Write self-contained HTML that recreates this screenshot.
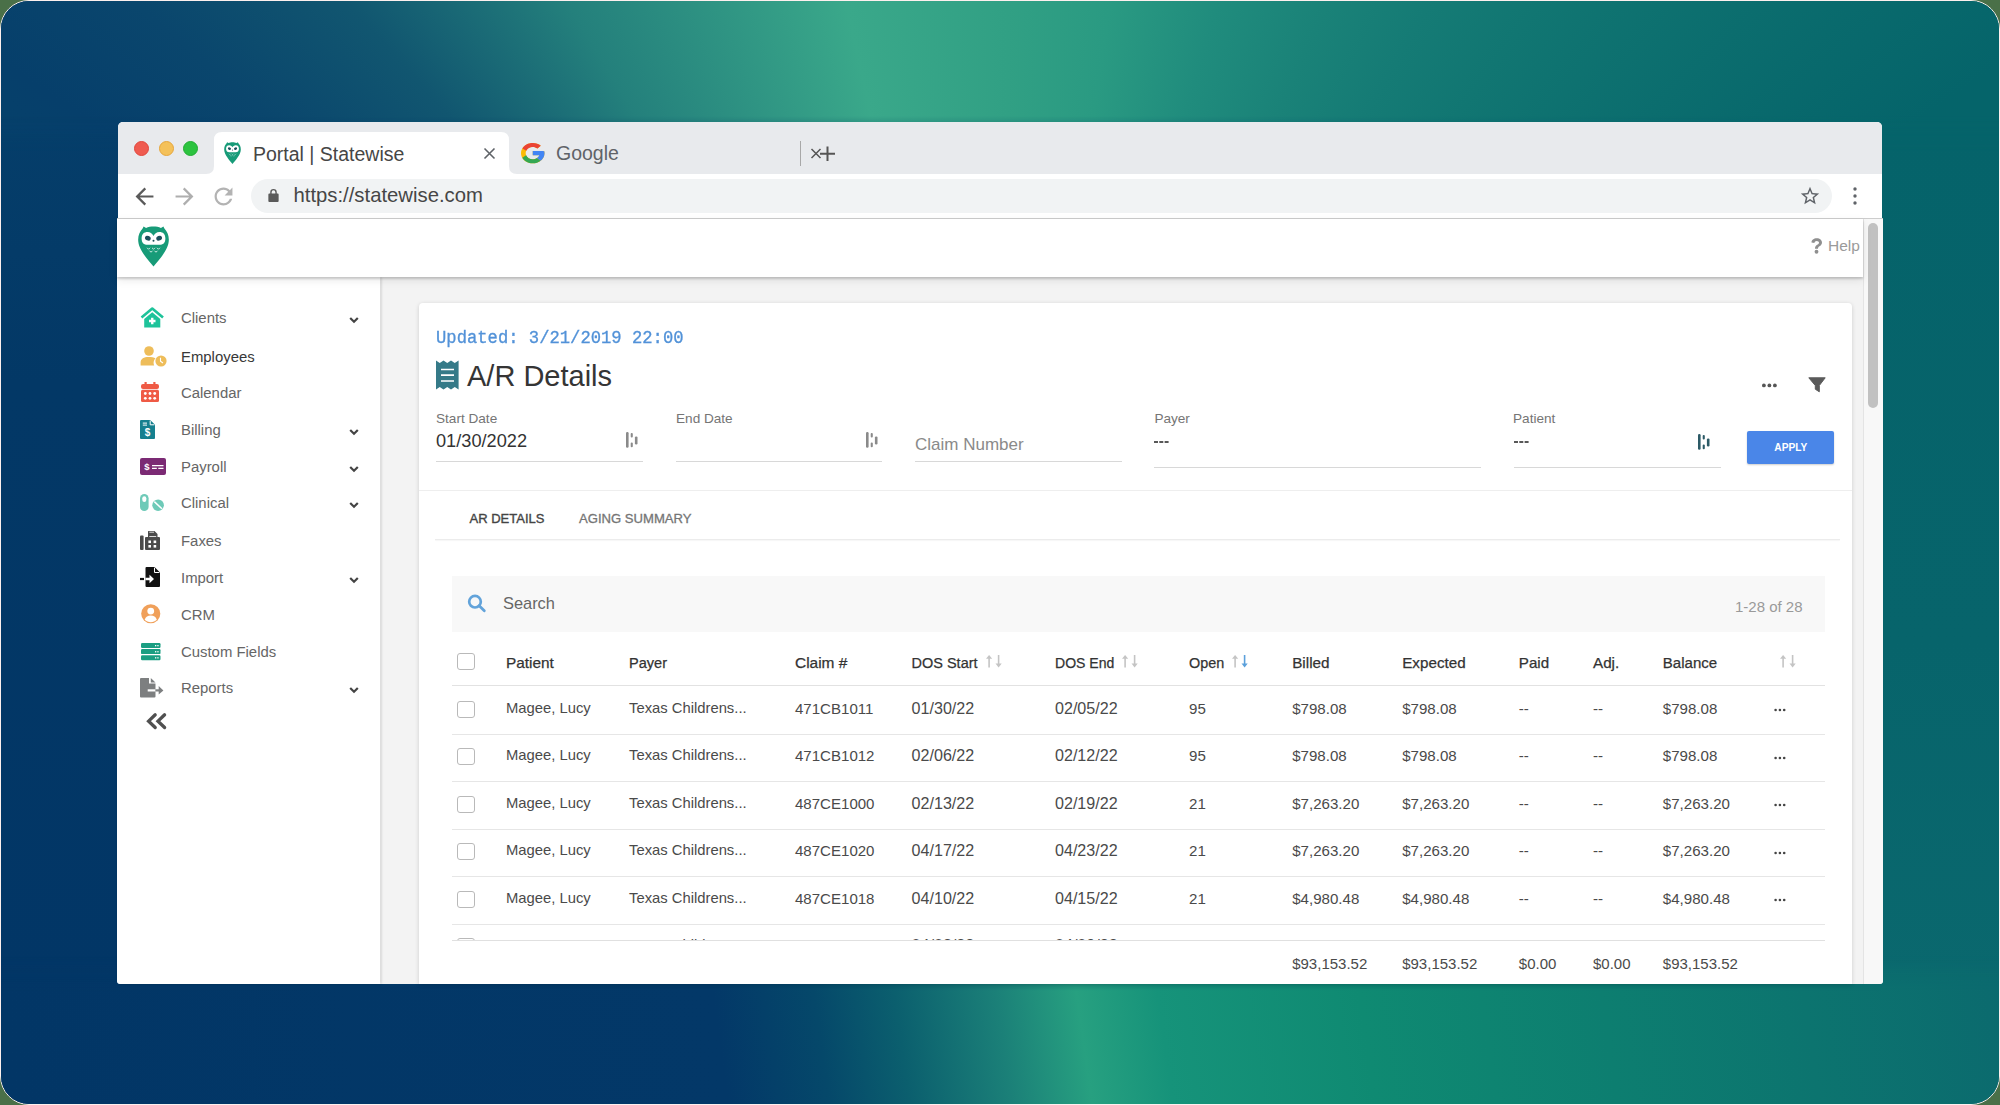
<!DOCTYPE html>
<html><head><meta charset="utf-8"><style>
*{box-sizing:border-box;margin:0;padding:0}
html,body{width:2000px;height:1105px;overflow:hidden;background:#4a7048;font-family:"Liberation Sans",sans-serif}
.abs{position:absolute}
.t{position:absolute;white-space:nowrap;line-height:1}
svg{overflow:visible}
</style></head><body>
<div class="abs" style="left:0;top:0;width:2000px;height:1105px;border:1.7px solid #fdf0ee;border-radius:29px;overflow:hidden;background:linear-gradient(90deg,#033866 0%,#07646b 100%)"><div class="abs" style="left:0;top:120px;width:120px;height:870px;background:linear-gradient(180deg,#053e6a 0%,#033866 30%,#023666 100%)"></div><div class="abs" style="left:1880px;top:120px;width:120px;height:870px;background:linear-gradient(180deg,#05636a 0%,#07646b 60%,#0a686e 100%)"></div><div class="abs" style="left:0;top:0;width:2000px;height:150px;background:conic-gradient(from 0deg at 1006px 734px,#31a084 0deg,#2a9a82 8deg,#208c7d 16deg,#1a8278 23.6deg,#157b75 30deg,#117672 36deg,#0b6d6e 46deg,#05646a 56deg,#05636a 250deg,#063f6b 303.8deg,#0a466d 310deg,#115670 318deg,#24807c 329deg,#3aa88a 347.6deg,#31a084 360deg);-webkit-mask-image:linear-gradient(180deg,#000 0,#000 115px,transparent 150px)"></div><div class="abs" style="left:0;top:955px;width:2000px;height:150px;background:linear-gradient(82deg,#023666 0%,#033868 36%,#05486a 41%,#0b5f6e 45%,#1b8078 50%,#27a080 54%,#16937a 58%,#0f8a72 68%,#0d7e70 80%,#0b6a6e 100%);-webkit-mask-image:linear-gradient(0deg,#000 0,#000 115px,transparent 150px)"></div></div>
<div class="abs" style="left:118px;top:122px;width:1764px;height:97px;background:#fff;border-radius:5px 5px 0 0;overflow:hidden"><div class="abs" style="left:0;top:0;width:1764px;height:52px;background:#e8eaed"></div></div>
<div class="abs" style="left:117px;top:218px;width:1766px;height:766px;background:#fff;border-radius:0 0 3px 3px"></div>
<div class="abs" style="left:133.5px;top:140.5px;width:15px;height:15px;border-radius:50%;background:#ef5b50;border:1px solid #e2463c"></div>
<div class="abs" style="left:158.5px;top:140.5px;width:15px;height:15px;border-radius:50%;background:#f4c15a;border:1px solid #e6a63c"></div>
<div class="abs" style="left:183.0px;top:140.5px;width:15px;height:15px;border-radius:50%;background:#2cc33f;border:1px solid #22ad33"></div>
<svg class="abs" style="left:204px;top:131px;" width="316" height="43" viewBox="0 0 316 43"><path d="M2 43 Q10 43 10 35 L10 9 Q10 1 18 1 L297 1 Q305 1 305 9 L305 35 Q305 43 313 43 Z" fill="#fff"/></svg>
<svg class="abs" style="left:223.5px;top:142px;" width="17" height="22" viewBox="0 0 31 41"><path fill="#179b78" d="M15.5 41 C10 34 0 24 0 14 C0 9 2 5 4.5 2.5 L5.5 0.5 L8 2 C10 1 13 0.6 15.5 0.6 C18 0.6 21 1 23 2 L25.5 0.5 L26.5 2.5 C29 5 31 9 31 14 C31 24 21 34 15.5 41Z"/><path fill="#fff" d="M3.5 12.5 C3.5 8 6 6 9.5 6 C12.5 6 14.5 8 15.5 10 C16.5 8 18.5 6 21.5 6 C25 6 27.5 8 27.5 12.5 C27.5 17 25 19 21.5 19 L9.5 19 C6 19 3.5 17 3.5 12.5Z"/><ellipse cx="9.8" cy="12.3" rx="3" ry="2.3" fill="#1d4f5c" transform="rotate(25 9.8 12.3)"/><ellipse cx="21.2" cy="12.3" rx="3" ry="2.3" fill="#1d4f5c" transform="rotate(-25 21.2 12.3)"/><circle cx="15.5" cy="15" r="1" fill="#1d4f5c"/><path d="M9 22 l1.5 1.5 l1.5-1.5 M14 22 l1.5 1.5 l1.5-1.5 M19 22 l1.5 1.5 l1.5-1.5 M11.5 25 l1.5 1.5 l1.5-1.5 M16.5 25 l1.5 1.5 l1.5-1.5" stroke="#fff" stroke-width="0.8" fill="none"/></svg>
<div class="t" style="left:253.00px;top:144.79px;font-size:19.5px;color:#464646;font-weight:normal;">Portal | Statewise</div>
<svg class="abs" style="left:483px;top:147px;" width="13" height="13" viewBox="0 0 13 13"><path d="M1.5 1.5 L11.5 11.5 M11.5 1.5 L1.5 11.5" stroke="#5f6368" stroke-width="1.6"/></svg>
<svg class="abs" style="left:521px;top:143px;" width="23.5" height="20.3" viewBox="4 4 40 40" preserveAspectRatio="none"><path fill="#FBBC05" d="M43.611,20.083H42V20H24v8h11.303c-1.649,4.657-6.08,8-11.303,8c-6.627,0-12-5.373-12-12c0-6.627,5.373-12,12-12c3.059,0,5.842,1.154,7.961,3.039l5.657-5.657C34.046,6.053,29.268,4,24,4C12.955,4,4,12.955,4,24c0,11.045,8.955,20,20,20c11.045,0,20-8.955,20-20C44,22.659,43.862,21.35,43.611,20.083z"/><path fill="#EA4335" d="M6.306,14.691l6.571,4.819C14.655,15.108,18.961,12,24,12c3.059,0,5.842,1.154,7.961,3.039l5.657-5.657C34.046,6.053,29.268,4,24,4C16.318,4,9.656,8.337,6.306,14.691z"/><path fill="#34A853" d="M24,44c5.166,0,9.86-1.977,13.409-5.192l-6.19-5.238C29.211,35.091,26.715,36,24,36c-5.202,0-9.619-3.317-11.283-7.946l-6.522,5.025C9.505,39.556,16.227,44,24,44z"/><path fill="#4285F4" d="M43.611,20.083H42V20H24v8h11.303c-0.792,2.237-2.231,4.166-4.087,5.571c0.001-0.001,0.002-0.001,0.003-0.002l6.19,5.238C36.971,39.205,44,34,44,24C44,22.659,43.862,21.35,43.611,20.083z"/></svg>
<div class="t" style="left:556.00px;top:143.99px;font-size:19.5px;color:#5f6368;font-weight:normal;">Google</div>
<div class="abs" style="left:800px;top:141px;width:1px;height:25px;background:#a8a8a8;"></div>
<svg class="abs" style="left:810px;top:146px;" width="28" height="16" viewBox="0 0 28 16"><path d="M1.5 3 L10.5 12 M10.5 3 L1.5 12" stroke="#555" stroke-width="1.5"/><path d="M17.5 0.5 V15 M10 7.8 H25" stroke="#555" stroke-width="2"/></svg>
<div class="abs" style="left:117px;top:218px;width:1766px;height:1px;background:#cdcdcd;"></div>
<svg class="abs" style="left:135px;top:187px;" width="19" height="19" viewBox="3.5 3.5 17 17"><path fill="#5a5a5a" d="M20 11H7.83l5.59-5.59L12 4l-8 8 8 8 1.41-1.41L7.83 13H20v-2z"/></svg>
<svg class="abs" style="left:175px;top:187px;" width="19" height="19" viewBox="3.5 3.5 17 17"><path fill="#aeaeae" d="M12 4l-1.41 1.41L16.17 11H4v2h12.17l-5.58 5.59L12 20l8-8z"/></svg>
<svg class="abs" style="left:214px;top:187px;" width="19" height="19" viewBox="3.5 3.5 17 17"><path fill="#b3b3b3" d="M17.65 6.35C16.2 4.9 14.21 4 12 4c-4.42 0-7.99 3.58-7.99 8s3.57 8 7.99 8c3.73 0 6.84-2.55 7.73-6h-2.08c-.82 2.33-3.04 4-5.65 4-3.31 0-6-2.69-6-6s2.69-6 6-6c1.66 0 3.14.69 4.22 1.78L13 11h7V4l-2.35 2.35z"/></svg>
<div class="abs" style="left:251px;top:179px;width:1581px;height:34px;border-radius:17px;background:#f1f3f4"></div>
<svg class="abs" style="left:268px;top:188px;" width="11" height="14" viewBox="0 0 11 15"><path fill="#5a5a5a" d="M2 6 V4.5 A3.5 3.5 0 0 1 9 4.5 V6 H10 A1 1 0 0 1 11 7 V14 A1 1 0 0 1 10 15 H1 A1 1 0 0 1 0 14 V7 A1 1 0 0 1 1 6Z M3.5 6 H7.5 V4.5 A2 2 0 0 0 3.5 4.5Z" fill-rule="evenodd"/></svg>
<div class="t" style="left:293.50px;top:185.12px;font-size:20.3px;color:#464646;font-weight:normal;">https://statewise.com</div>
<svg class="abs" style="left:1799px;top:185px;" width="22" height="22" viewBox="0 0 24 24"><path fill="#5f6368" d="M22 9.24l-7.19-.62L12 2 9.19 8.63 2 9.24l5.46 4.73L5.82 21 12 17.27 18.18 21l-1.63-7.03L22 9.24zM12 15.4l-3.76 2.27 1-4.28-3.32-2.88 4.38-.38L12 6.1l1.71 4.04 4.38.38-3.32 2.88 1 4.28L12 15.4z"/></svg>
<svg class="abs" style="left:1851px;top:186px;" width="8" height="20" viewBox="0 0 8 20"><circle cx="4" cy="3" r="1.7" fill="#5f6368"/><circle cx="4" cy="10" r="1.7" fill="#5f6368"/><circle cx="4" cy="17" r="1.7" fill="#5f6368"/></svg>
<div class="abs" style="left:381px;top:277px;width:1482px;height:707px;background:#f3f3f3;"></div>
<div class="abs" style="left:1863px;top:219px;width:20px;height:765px;background:#f8f8f8;border-left:1px solid #e4e4e4;border-bottom-right-radius:4px"></div>
<div class="abs" style="left:1868px;top:223px;width:10px;height:185px;border-radius:5px;background:#c1c1c1"></div>
<div class="abs" style="left:117px;top:219px;width:1746px;height:58px;background:#fff;box-shadow:0 1.5px 2px rgba(0,0,0,.17),0 3px 9px rgba(0,0,0,.09);z-index:3"></div>
<svg class="abs" style="left:137.5px;top:225.7px;z-index:4" width="31" height="40.6" viewBox="0 0 31 41"><path fill="#179b78" d="M15.5 41 C10 34 0 24 0 14 C0 9 2 5 4.5 2.5 L5.5 0.5 L8 2 C10 1 13 0.6 15.5 0.6 C18 0.6 21 1 23 2 L25.5 0.5 L26.5 2.5 C29 5 31 9 31 14 C31 24 21 34 15.5 41Z"/><path fill="#fff" d="M3.5 12.5 C3.5 8 6 6 9.5 6 C12.5 6 14.5 8 15.5 10 C16.5 8 18.5 6 21.5 6 C25 6 27.5 8 27.5 12.5 C27.5 17 25 19 21.5 19 L9.5 19 C6 19 3.5 17 3.5 12.5Z"/><ellipse cx="9.8" cy="12.3" rx="3" ry="2.3" fill="#1d4f5c" transform="rotate(25 9.8 12.3)"/><ellipse cx="21.2" cy="12.3" rx="3" ry="2.3" fill="#1d4f5c" transform="rotate(-25 21.2 12.3)"/><circle cx="15.5" cy="15" r="1" fill="#1d4f5c"/><path d="M9 22 l1.5 1.5 l1.5-1.5 M14 22 l1.5 1.5 l1.5-1.5 M19 22 l1.5 1.5 l1.5-1.5 M11.5 25 l1.5 1.5 l1.5-1.5 M16.5 25 l1.5 1.5 l1.5-1.5" stroke="#fff" stroke-width="0.8" fill="none"/></svg>
<svg class="abs" style="left:1811px;top:237.5px;z-index:4" width="11.5" height="16" viewBox="0 0 23 32"><path fill="#8f8f8f" d="M1 9 C1 4 5.5 0.5 11.5 0.5 C18 0.5 22 4.5 22 9 C22 13 19.5 15 17 16.5 C14.5 18 14 19.5 14 21.5 L8 21.5 C8 18 9 15.5 12.5 13.5 C15 12 16 11 16 9.5 C16 7.5 14 6 11.5 6 C9 6 7 7.5 6.8 10 Z"/><circle cx="11" cy="27.5" r="3.8" fill="#8f8f8f"/></svg>
<div class="t" style="left:1828.00px;top:237.88px;font-size:15.5px;color:#9a9a9a;font-weight:normal;z-index:4">Help</div>
<div class="abs" style="left:117px;top:277px;width:263px;height:707px;background:#fff;box-shadow:1px 0 3px rgba(0,0,0,.2);border-bottom-left-radius:4px;z-index:2"></div>
<div class="t" style="left:181.00px;top:311.19px;font-size:14.9px;color:#666;font-weight:normal;z-index:3;">Clients</div>
<svg class="abs" style="left:348.5px;top:317.2px;z-index:3" width="10" height="6" viewBox="0 0 10 6"><path d="M1.2 1 L5 4.8 L8.8 1" stroke="#444" stroke-width="2.2" fill="none"/></svg>
<div class="t" style="left:181.00px;top:349.79px;font-size:14.9px;color:#383838;font-weight:normal;z-index:3;">Employees</div>
<div class="t" style="left:181.00px;top:385.89px;font-size:14.9px;color:#666;font-weight:normal;z-index:3;">Calendar</div>
<div class="t" style="left:181.00px;top:423.29px;font-size:14.9px;color:#666;font-weight:normal;z-index:3;">Billing</div>
<svg class="abs" style="left:348.5px;top:429.29999999999995px;z-index:3" width="10" height="6" viewBox="0 0 10 6"><path d="M1.2 1 L5 4.8 L8.8 1" stroke="#444" stroke-width="2.2" fill="none"/></svg>
<div class="t" style="left:181.00px;top:459.99px;font-size:14.9px;color:#666;font-weight:normal;z-index:3;">Payroll</div>
<svg class="abs" style="left:348.5px;top:466.0px;z-index:3" width="10" height="6" viewBox="0 0 10 6"><path d="M1.2 1 L5 4.8 L8.8 1" stroke="#444" stroke-width="2.2" fill="none"/></svg>
<div class="t" style="left:181.00px;top:495.99px;font-size:14.9px;color:#666;font-weight:normal;z-index:3;">Clinical</div>
<svg class="abs" style="left:348.5px;top:502.0px;z-index:3" width="10" height="6" viewBox="0 0 10 6"><path d="M1.2 1 L5 4.8 L8.8 1" stroke="#444" stroke-width="2.2" fill="none"/></svg>
<div class="t" style="left:181.00px;top:533.99px;font-size:14.9px;color:#666;font-weight:normal;z-index:3;">Faxes</div>
<div class="t" style="left:181.00px;top:570.69px;font-size:14.9px;color:#666;font-weight:normal;z-index:3;">Import</div>
<svg class="abs" style="left:348.5px;top:576.6999999999999px;z-index:3" width="10" height="6" viewBox="0 0 10 6"><path d="M1.2 1 L5 4.8 L8.8 1" stroke="#444" stroke-width="2.2" fill="none"/></svg>
<div class="t" style="left:181.00px;top:608.19px;font-size:14.9px;color:#666;font-weight:normal;z-index:3;">CRM</div>
<div class="t" style="left:181.00px;top:644.69px;font-size:14.9px;color:#666;font-weight:normal;z-index:3;">Custom Fields</div>
<div class="t" style="left:181.00px;top:681.09px;font-size:14.9px;color:#666;font-weight:normal;z-index:3;">Reports</div>
<svg class="abs" style="left:348.5px;top:687.1px;z-index:3" width="10" height="6" viewBox="0 0 10 6"><path d="M1.2 1 L5 4.8 L8.8 1" stroke="#444" stroke-width="2.2" fill="none"/></svg>
<svg class="abs" style="left:140px;top:307px;z-index:3" width="25" height="21" viewBox="0 0 25 21"><path d="M1.5 10.5 L12.25 1.5 L23 10.5" stroke="#1ec39a" stroke-width="2.6" fill="none" stroke-linejoin="round"/><path d="M4.2 12 L12.25 5.2 L20.3 12 L20.3 20.5 L4.2 20.5Z" fill="#1ec39a"/><path d="M12.25 10.8 V17.2 M9 14 H15.5" stroke="#fff" stroke-width="2.4"/></svg>
<svg class="abs" style="left:139.5px;top:345.5px;z-index:3" width="27" height="20" viewBox="0 0 27 20"><circle cx="9" cy="5" r="4.8" fill="#eebd5a"/><path d="M0.6 19.5 L0.6 16.5 C0.6 12.8 4 11 8.5 11 C11.5 11 14 11.5 15.5 12.3 C14.3 13.5 13.6 15.3 13.6 17 C13.6 18 13.8 18.8 14.2 19.5 Z" fill="#eebd5a"/><circle cx="21" cy="15" r="5.6" fill="#eebd5a"/><path d="M20.5 11.8 V15.3 L23 17" stroke="#fff" stroke-width="1.1" fill="none"/></svg>
<svg class="abs" style="left:140.5px;top:382px;z-index:3" width="18" height="20" viewBox="0 0 18 20"><rect x="0" y="2" width="18" height="5" rx="2" fill="#ef5a45"/><rect x="0" y="7.8" width="18" height="12.2" rx="1.5" fill="#ef5a45"/><rect x="3.5" y="0" width="2.2" height="4" fill="#ef5a45"/><rect x="12.3" y="0" width="2.2" height="4" fill="#ef5a45"/><g fill="#fff"><circle cx="4.3" cy="11.5" r="1.4"/><circle cx="9" cy="11.5" r="1.4"/><circle cx="13.7" cy="11.5" r="1.4"/><circle cx="4.3" cy="16.3" r="1.4"/><circle cx="9" cy="16.3" r="1.4"/><circle cx="13.7" cy="16.3" r="1.4"/></g></svg>
<svg class="abs" style="left:140.4px;top:419.8px;z-index:3" width="15" height="19" viewBox="0 0 15 19"><path d="M0 1 Q0 0 1 0 L10.2 0 L15 4.8 L15 18 Q15 19 14 19 L1 19 Q0 19 0 18 Z" fill="#16808f"/><path d="M10.2 0.6 L10.2 4.8 L14.4 4.8" stroke="#fff" stroke-width="1" fill="none"/><rect x="2.8" y="2.6" width="4.2" height="1" fill="#fff"/><rect x="2.8" y="4.6" width="4.2" height="1" fill="#fff"/><text x="7.5" y="15.8" font-size="10" font-weight="bold" fill="#fff" text-anchor="middle" font-family="Liberation Sans">$</text></svg>
<svg class="abs" style="left:140.4px;top:457.8px;z-index:3" width="26" height="17" viewBox="0 0 26 17"><rect x="0" y="0" width="26" height="17" rx="2" fill="#7b2a74"/><text x="6.8" y="12.3" font-size="9.5" font-weight="bold" fill="#fff" text-anchor="middle" font-family="Liberation Sans">$</text><path d="M12 7.6 H23.5 M12 10.4 H16.8 M18.3 10.4 H23.5" stroke="#fff" stroke-width="1.3"/></svg>
<svg class="abs" style="left:140.4px;top:494.2px;z-index:3" width="24" height="17" viewBox="0 0 24 17"><rect x="0" y="0" width="8.6" height="17" rx="4.3" fill="#6ecab8"/><rect x="2.3" y="2.3" width="4" height="5.6" rx="2" fill="#fff"/><circle cx="18.1" cy="11.2" r="5.8" fill="#6ecab8"/><path d="M14.3 7.6 L21.9 14.8" stroke="#fff" stroke-width="1.5"/></svg>
<svg class="abs" style="left:140.4px;top:530.8px;z-index:3" width="20" height="19" viewBox="0 0 20 19"><rect x="0" y="4.5" width="3.6" height="14.5" rx="1" fill="#4a4a4a"/><path d="M5 7 Q5 6 6 6 L8 6 L8 0.5 Q8 0 8.5 0 L14.5 0 L17.5 3 L17.5 6 L19 6 Q20 6 20 7 L20 18 Q20 19 19 19 L6 19 Q5 19 5 18 Z" fill="#4a4a4a"/><path d="M9.3 5.5 H16.2 M9.3 1.2 H14" stroke="#fff" stroke-width="0.8"/><g fill="#fff"><rect x="8.4" y="9.5" width="2.6" height="2.6"/><rect x="13.6" y="9.5" width="2.6" height="2.6"/><rect x="8.4" y="14" width="2.6" height="2.6"/><rect x="13.6" y="14" width="2.6" height="2.6"/></g></svg>
<svg class="abs" style="left:140.3px;top:567px;z-index:3" width="20" height="20" viewBox="0 0 20 20"><path d="M5.5 1 Q5.5 0 6.5 0 L14.5 0 L20 5.5 L20 19 Q20 20 19 20 L6.5 20 Q5.5 20 5.5 19 Z" fill="#111"/><path d="M14.5 0.7 L14.5 5.5 L19.3 5.5" stroke="#fff" stroke-width="1" fill="none"/><path d="M0 12 H4" stroke="#111" stroke-width="2.2"/><path d="M5.5 10.8 H9.5 V7.8 L14 12 L9.5 16.2 V13.2 H5.5 Z" fill="#fff"/></svg>
<svg class="abs" style="left:140.6px;top:604px;z-index:3" width="19.5" height="19.5" viewBox="0 0 20 20"><circle cx="10" cy="10" r="9.8" fill="#f0a05a"/><circle cx="10" cy="7.3" r="3.5" fill="#fff"/><path d="M3.8 16.2 C4.8 13 7 11.8 10 11.8 C13 11.8 15.2 13 16.2 16.2 C14.6 17.8 12.4 18.6 10 18.6 C7.6 18.6 5.4 17.8 3.8 16.2Z" fill="#fff"/></svg>
<svg class="abs" style="left:140.6px;top:642.7px;z-index:3" width="19.5" height="17.2" viewBox="0 0 19.5 17.2"><g fill="#1a9e82"><rect x="0" y="0" width="19.5" height="5" rx="1.2"/><rect x="0" y="6.1" width="19.5" height="5" rx="1.2"/><rect x="0" y="12.2" width="19.5" height="5" rx="1.2"/></g><g fill="#fff"><rect x="14" y="2" width="1.3" height="1.3"/><rect x="16.3" y="2" width="1.3" height="1.3"/><rect x="14" y="8.1" width="1.3" height="1.3"/><rect x="16.3" y="8.1" width="1.3" height="1.3"/><rect x="14" y="14.2" width="1.3" height="1.3"/><rect x="16.3" y="14.2" width="1.3" height="1.3"/></g></svg>
<svg class="abs" style="left:140.3px;top:678px;z-index:3" width="23.6" height="19.7" viewBox="0 0 23.6 19.7"><path d="M0 1 Q0 0 1 0 H9 V5.6 H15.5 V18.6 Q15.5 19.6 14.5 19.6 H1 Q0 19.6 0 18.6 Z" fill="#7d7f80"/><path d="M10.8 0 L15.5 4.6 H10.8 Z" fill="#7d7f80"/><rect x="7.7" y="11.3" width="7.8" height="2.2" fill="#fff"/><rect x="15.5" y="11.3" width="3.6" height="2.2" fill="#7d7f80"/><path d="M18.7 8 L23.4 12.4 L18.7 16.4 Z" fill="#7d7f80"/></svg>
<svg class="abs" style="left:145.5px;top:713.2px;z-index:3" width="21" height="16.3" viewBox="0 0 21 16.3"><path d="M9.2 1.8 L2.6 8.15 L9.2 14.5 M18.6 1.8 L12 8.15 L18.6 14.5" stroke="#505050" stroke-width="3.3" fill="none" stroke-linecap="round"/></svg>
<div class="abs" style="left:419px;top:303px;width:1433px;height:681px;background:#fff;box-shadow:0 1px 4px rgba(0,0,0,.16);border-radius:4px 4px 0 0;z-index:1"></div>
<div class="t" style="left:436.00px;top:329.82px;font-size:17.2px;color:#5292d8;font-weight:normal;font-family:'Liberation Mono',monospace;z-index:2;-webkit-text-stroke:0.3px #5292d8;transform:scaleY(1.08);transform-origin:0 76.6%">Updated: 3/21/2019 22:00</div>
<svg class="abs" style="left:436px;top:360px;z-index:2" width="23" height="30" viewBox="0 0 23 30"><path d="M0 0.6 L3.75 3 L7.5 0.6 L11.25 3 L15 0.6 L18.75 3 L22.6 0.6 V29.4 L18.75 27 L15 29.4 L11.25 27 L7.5 29.4 L3.75 27 L0 29.4 Z" fill="#357a88"/><path d="M5 9.5 H18 M5 15.1 H18 M5 21 H18" stroke="#fff" stroke-width="1.7"/></svg>
<div class="t" style="left:467.00px;top:362.45px;font-size:29px;color:#353535;font-weight:normal;z-index:2;">A/R Details</div>
<svg class="abs" style="left:1761px;top:382.5px;z-index:2" width="16" height="5" viewBox="0 0 16 5"><circle cx="2.9" cy="2.4" r="1.9" fill="#555"/><circle cx="8.4" cy="2.4" r="1.9" fill="#555"/><circle cx="13.9" cy="2.4" r="1.9" fill="#555"/></svg>
<svg class="abs" style="left:1808px;top:377px;z-index:2" width="18" height="16" viewBox="0 0 18 16"><path d="M0.8 0.8 H17.2 L11.3 8.5 V14.8 L7.3 12.2 V8.5 Z" fill="#5a5a5a" stroke="#5a5a5a" stroke-width="1" stroke-linejoin="round"/></svg>
<div class="t" style="left:436.00px;top:412.09px;font-size:13.6px;color:#757575;font-weight:normal;z-index:2;">Start Date</div>
<div class="t" style="left:676.00px;top:412.09px;font-size:13.6px;color:#757575;font-weight:normal;z-index:2;">End Date</div>
<div class="t" style="left:1154.40px;top:412.09px;font-size:13.6px;color:#757575;font-weight:normal;z-index:2;">Payer</div>
<div class="t" style="left:1513.00px;top:412.09px;font-size:13.6px;color:#757575;font-weight:normal;z-index:2;">Patient</div>
<div class="t" style="left:436.00px;top:432.09px;font-size:18.2px;color:#333;font-weight:normal;z-index:2;">01/30/2022</div>
<svg class="abs" style="left:626px;top:432px;z-index:2" width="12" height="16" viewBox="0 0 12 16"><g fill="#8a8a8a"><rect x="0" y="0" width="2.6" height="15.7" rx="1.2"/><rect x="4.7" y="1" width="2.1" height="4.6" rx="1"/><rect x="4.7" y="10.5" width="2.1" height="4.8" rx="1"/><rect x="8.9" y="4.4" width="2.6" height="8.1" rx="1.2"/></g></svg>
<svg class="abs" style="left:866px;top:432px;z-index:2" width="12" height="16" viewBox="0 0 12 16"><g fill="#8a8a8a"><rect x="0" y="0" width="2.6" height="15.7" rx="1.2"/><rect x="4.7" y="1" width="2.1" height="4.6" rx="1"/><rect x="4.7" y="10.5" width="2.1" height="4.8" rx="1"/><rect x="8.9" y="4.4" width="2.6" height="8.1" rx="1.2"/></g></svg>
<svg class="abs" style="left:1698px;top:433.6px;z-index:2" width="12" height="16" viewBox="0 0 12 16"><g fill="#2c5a66"><rect x="0" y="0" width="2.6" height="15.7" rx="1.2"/><rect x="4.7" y="1" width="2.1" height="4.6" rx="1"/><rect x="4.7" y="10.5" width="2.1" height="4.8" rx="1"/><rect x="8.9" y="4.4" width="2.6" height="8.1" rx="1.2"/></g></svg>
<div class="t" style="left:915.00px;top:435.61px;font-size:17px;color:#8a8a8a;font-weight:normal;z-index:2;">Claim Number</div>
<svg class="abs" style="left:1154px;top:441px;z-index:2" width="15" height="2" viewBox="0 0 15 2"><path d="M0 1 H4 M5.3 1 H9.3 M10.6 1 H14.6" stroke="#222" stroke-width="1.5"/></svg>
<svg class="abs" style="left:1513.8px;top:441px;z-index:2" width="15" height="2" viewBox="0 0 15 2"><path d="M0 1 H4 M5.3 1 H9.3 M10.6 1 H14.6" stroke="#222" stroke-width="1.5"/></svg>
<div class="abs" style="left:436px;top:461px;width:207px;height:1px;background:#d8d8d8;z-index:2"></div>
<div class="abs" style="left:676px;top:461px;width:206px;height:1px;background:#d8d8d8;z-index:2"></div>
<div class="abs" style="left:915px;top:461px;width:207px;height:1px;background:#d8d8d8;z-index:2"></div>
<div class="abs" style="left:1154px;top:467px;width:327px;height:1px;background:#d8d8d8;z-index:2"></div>
<div class="abs" style="left:1513.8px;top:467px;width:206.9000000000001px;height:1px;background:#d8d8d8;z-index:2"></div>
<div class="abs" style="left:1747px;top:431px;width:87px;height:33px;background:#4a86e8;border-radius:2px;box-shadow:0 1px 2px rgba(0,0,0,.2);z-index:2"></div>
<div class="t" style="left:1774.30px;top:442.87px;font-size:10.2px;color:#fff;font-weight:bold;z-index:2;">APPLY</div>
<div class="abs" style="left:419px;top:489.5px;width:1433px;height:1px;background:#eeeeee;z-index:2"></div>
<div class="t" style="left:469.50px;top:512.30px;font-size:13px;color:#444;font-weight:normal;z-index:2;-webkit-text-stroke:0.35px #444">AR DETAILS</div>
<div class="t" style="left:579.00px;top:512.21px;font-size:13.1px;color:#757575;font-weight:normal;z-index:2;-webkit-text-stroke:0.3px #757575">AGING SUMMARY</div>
<div class="abs" style="left:435px;top:538.5px;width:1405px;height:1.5px;background:#ececec;box-shadow:0 1px 1px rgba(0,0,0,.04);z-index:2"></div>
<div class="abs" style="left:452px;top:576px;width:1373px;height:56px;background:#f8f8f8;z-index:2"></div>
<svg class="abs" style="left:466px;top:593px;z-index:2" width="20" height="20" viewBox="0 0 20 20"><circle cx="9" cy="8.7" r="5.8" stroke="#62a3da" stroke-width="2.7" fill="none"/><path d="M13.2 12.8 L18.3 17.7" stroke="#62a3da" stroke-width="2.8" stroke-linecap="round"/></svg>
<div class="t" style="left:503.00px;top:595.12px;font-size:16.4px;color:#666;font-weight:normal;z-index:2;">Search</div>
<div class="t" style="left:1735.00px;top:598.60px;font-size:15px;color:#9a9a9a;font-weight:normal;z-index:2;">1-28 of 28</div>
<div class="t" style="left:506.00px;top:654.98px;font-size:15.38px;color:#333;font-weight:normal;z-index:2;-webkit-text-stroke:0.25px #333">Patient</div>
<div class="t" style="left:629.00px;top:655.67px;font-size:14.56px;color:#333;font-weight:normal;z-index:2;-webkit-text-stroke:0.25px #333">Payer</div>
<div class="t" style="left:795.00px;top:654.91px;font-size:15.46px;color:#333;font-weight:normal;z-index:2;-webkit-text-stroke:0.25px #333">Claim #</div>
<div class="t" style="left:911.60px;top:655.75px;font-size:14.47px;color:#333;font-weight:normal;z-index:2;-webkit-text-stroke:0.25px #333">DOS Start</div>
<div class="t" style="left:1055.00px;top:656.11px;font-size:14.05px;color:#333;font-weight:normal;z-index:2;-webkit-text-stroke:0.25px #333">DOS End</div>
<div class="t" style="left:1189.00px;top:655.80px;font-size:14.41px;color:#333;font-weight:normal;z-index:2;-webkit-text-stroke:0.25px #333">Open</div>
<div class="t" style="left:1292.20px;top:655.07px;font-size:15.27px;color:#333;font-weight:normal;z-index:2;-webkit-text-stroke:0.25px #333">Billed</div>
<div class="t" style="left:1402.20px;top:655.11px;font-size:15.23px;color:#333;font-weight:normal;z-index:2;-webkit-text-stroke:0.25px #333">Expected</div>
<div class="t" style="left:1518.80px;top:655.18px;font-size:15.15px;color:#333;font-weight:normal;z-index:2;-webkit-text-stroke:0.25px #333">Paid</div>
<div class="t" style="left:1593.00px;top:655.11px;font-size:15.23px;color:#333;font-weight:normal;z-index:2;-webkit-text-stroke:0.25px #333">Adj.</div>
<div class="t" style="left:1662.80px;top:655.27px;font-size:15.04px;color:#333;font-weight:normal;z-index:2;-webkit-text-stroke:0.25px #333">Balance</div>
<div class="abs" style="left:457.4px;top:652.6px;width:17.4px;height:17px;border:1.3px solid #b9b9b9;border-radius:3px;background:#fff;z-index:2"></div>
<svg class="abs" style="left:985.8px;top:655.1px;z-index:2" width="16" height="13" viewBox="0 0 16 13"><path d="M3.1 12.4 V2.5" stroke="#c4c4c4" stroke-width="1.6"/><path d="M0 3.8 L3.1 0 L6.2 3.8Z" fill="#c4c4c4"/><path d="M12.6 0 V10" stroke="#c4c4c4" stroke-width="1.6"/><path d="M9.5 8.6 L12.6 12.5 L15.7 8.6Z" fill="#c4c4c4"/></svg>
<svg class="abs" style="left:1121.5px;top:655.1px;z-index:2" width="16" height="13" viewBox="0 0 16 13"><path d="M3.1 12.4 V2.5" stroke="#c4c4c4" stroke-width="1.6"/><path d="M0 3.8 L3.1 0 L6.2 3.8Z" fill="#c4c4c4"/><path d="M12.6 0 V10" stroke="#c4c4c4" stroke-width="1.6"/><path d="M9.5 8.6 L12.6 12.5 L15.7 8.6Z" fill="#c4c4c4"/></svg>
<svg class="abs" style="left:1232px;top:655.1px;z-index:2" width="16" height="13" viewBox="0 0 16 13"><path d="M3.1 12.4 V2.5" stroke="#c4c4c4" stroke-width="1.6"/><path d="M0 3.8 L3.1 0 L6.2 3.8Z" fill="#c4c4c4"/><path d="M12.6 0 V10" stroke="#5ba0db" stroke-width="1.6"/><path d="M9.5 8.6 L12.6 12.5 L15.7 8.6Z" fill="#5ba0db"/></svg>
<svg class="abs" style="left:1780px;top:655.1px;z-index:2" width="16" height="13" viewBox="0 0 16 13"><path d="M3.1 12.4 V2.5" stroke="#c4c4c4" stroke-width="1.6"/><path d="M0 3.8 L3.1 0 L6.2 3.8Z" fill="#c4c4c4"/><path d="M12.6 0 V10" stroke="#c4c4c4" stroke-width="1.6"/><path d="M9.5 8.6 L12.6 12.5 L15.7 8.6Z" fill="#c4c4c4"/></svg>
<div class="abs" style="left:452px;top:684.5px;width:1373px;height:1.5px;background:#e2e2e2;z-index:2"></div>
<div class="abs" style="left:419px;top:686px;width:1433px;height:254px;overflow:hidden;z-index:2"><div class="t" style="left:87.00px;top:14.97px;font-size:14.8px;color:#4a4a4a;font-weight:normal;">Magee, Lucy</div>
<div class="t" style="left:210.00px;top:14.97px;font-size:14.8px;color:#4a4a4a;font-weight:normal;">Texas Childrens...</div>
<div class="t" style="left:376.00px;top:14.76px;font-size:15.05px;color:#4a4a4a;font-weight:normal;">471CB1011</div>
<div class="t" style="left:492.60px;top:13.87px;font-size:16.1px;color:#4a4a4a;font-weight:normal;">01/30/22</div>
<div class="t" style="left:636.00px;top:13.87px;font-size:16.1px;color:#4a4a4a;font-weight:normal;">02/05/22</div>
<div class="t" style="left:770.00px;top:14.72px;font-size:15.1px;color:#4a4a4a;font-weight:normal;">95</div>
<div class="t" style="left:873.20px;top:14.72px;font-size:15.1px;color:#4a4a4a;font-weight:normal;">$798.08</div>
<div class="t" style="left:983.20px;top:14.72px;font-size:15.1px;color:#4a4a4a;font-weight:normal;">$798.08</div>
<div class="t" style="left:1099.80px;top:14.72px;font-size:15.1px;color:#4a4a4a;font-weight:normal;">--</div>
<div class="t" style="left:1174.00px;top:14.72px;font-size:15.1px;color:#4a4a4a;font-weight:normal;">--</div>
<div class="t" style="left:1243.80px;top:14.72px;font-size:15.1px;color:#4a4a4a;font-weight:normal;">$798.08</div>
<div class="abs" style="left:38.39999999999998px;top:14.600000000000023px;width:17.4px;height:17px;border:1.3px solid #b9b9b9;border-radius:3px;background:#fff"></div>
<svg class="abs" style="left:1354.5px;top:22.299999999999955px;" width="12" height="4" viewBox="0 0 12 4"><circle cx="1.6" cy="2" r="1.3" fill="#444"/><circle cx="5.9" cy="2" r="1.3" fill="#444"/><circle cx="10.2" cy="2" r="1.3" fill="#444"/></svg>
<div class="abs" style="left:33px;top:47.5px;width:1373px;height:1.2px;background:#e6e6e6;"></div>
<div class="t" style="left:87.00px;top:62.47px;font-size:14.8px;color:#4a4a4a;font-weight:normal;">Magee, Lucy</div>
<div class="t" style="left:210.00px;top:62.47px;font-size:14.8px;color:#4a4a4a;font-weight:normal;">Texas Childrens...</div>
<div class="t" style="left:376.00px;top:62.26px;font-size:15.05px;color:#4a4a4a;font-weight:normal;">471CB1012</div>
<div class="t" style="left:492.60px;top:61.37px;font-size:16.1px;color:#4a4a4a;font-weight:normal;">02/06/22</div>
<div class="t" style="left:636.00px;top:61.37px;font-size:16.1px;color:#4a4a4a;font-weight:normal;">02/12/22</div>
<div class="t" style="left:770.00px;top:62.22px;font-size:15.1px;color:#4a4a4a;font-weight:normal;">95</div>
<div class="t" style="left:873.20px;top:62.22px;font-size:15.1px;color:#4a4a4a;font-weight:normal;">$798.08</div>
<div class="t" style="left:983.20px;top:62.22px;font-size:15.1px;color:#4a4a4a;font-weight:normal;">$798.08</div>
<div class="t" style="left:1099.80px;top:62.22px;font-size:15.1px;color:#4a4a4a;font-weight:normal;">--</div>
<div class="t" style="left:1174.00px;top:62.22px;font-size:15.1px;color:#4a4a4a;font-weight:normal;">--</div>
<div class="t" style="left:1243.80px;top:62.22px;font-size:15.1px;color:#4a4a4a;font-weight:normal;">$798.08</div>
<div class="abs" style="left:38.39999999999998px;top:62.10000000000002px;width:17.4px;height:17px;border:1.3px solid #b9b9b9;border-radius:3px;background:#fff"></div>
<svg class="abs" style="left:1354.5px;top:69.79999999999995px;" width="12" height="4" viewBox="0 0 12 4"><circle cx="1.6" cy="2" r="1.3" fill="#444"/><circle cx="5.9" cy="2" r="1.3" fill="#444"/><circle cx="10.2" cy="2" r="1.3" fill="#444"/></svg>
<div class="abs" style="left:33px;top:95.0px;width:1373px;height:1.2px;background:#e6e6e6;"></div>
<div class="t" style="left:87.00px;top:109.97px;font-size:14.8px;color:#4a4a4a;font-weight:normal;">Magee, Lucy</div>
<div class="t" style="left:210.00px;top:109.97px;font-size:14.8px;color:#4a4a4a;font-weight:normal;">Texas Childrens...</div>
<div class="t" style="left:376.00px;top:109.76px;font-size:15.05px;color:#4a4a4a;font-weight:normal;">487CE1000</div>
<div class="t" style="left:492.60px;top:108.87px;font-size:16.1px;color:#4a4a4a;font-weight:normal;">02/13/22</div>
<div class="t" style="left:636.00px;top:108.87px;font-size:16.1px;color:#4a4a4a;font-weight:normal;">02/19/22</div>
<div class="t" style="left:770.00px;top:109.72px;font-size:15.1px;color:#4a4a4a;font-weight:normal;">21</div>
<div class="t" style="left:873.20px;top:109.72px;font-size:15.1px;color:#4a4a4a;font-weight:normal;">$7,263.20</div>
<div class="t" style="left:983.20px;top:109.72px;font-size:15.1px;color:#4a4a4a;font-weight:normal;">$7,263.20</div>
<div class="t" style="left:1099.80px;top:109.72px;font-size:15.1px;color:#4a4a4a;font-weight:normal;">--</div>
<div class="t" style="left:1174.00px;top:109.72px;font-size:15.1px;color:#4a4a4a;font-weight:normal;">--</div>
<div class="t" style="left:1243.80px;top:109.72px;font-size:15.1px;color:#4a4a4a;font-weight:normal;">$7,263.20</div>
<div class="abs" style="left:38.39999999999998px;top:109.60000000000002px;width:17.4px;height:17px;border:1.3px solid #b9b9b9;border-radius:3px;background:#fff"></div>
<svg class="abs" style="left:1354.5px;top:117.29999999999995px;" width="12" height="4" viewBox="0 0 12 4"><circle cx="1.6" cy="2" r="1.3" fill="#444"/><circle cx="5.9" cy="2" r="1.3" fill="#444"/><circle cx="10.2" cy="2" r="1.3" fill="#444"/></svg>
<div class="abs" style="left:33px;top:142.5px;width:1373px;height:1.2px;background:#e6e6e6;"></div>
<div class="t" style="left:87.00px;top:157.47px;font-size:14.8px;color:#4a4a4a;font-weight:normal;">Magee, Lucy</div>
<div class="t" style="left:210.00px;top:157.47px;font-size:14.8px;color:#4a4a4a;font-weight:normal;">Texas Childrens...</div>
<div class="t" style="left:376.00px;top:157.26px;font-size:15.05px;color:#4a4a4a;font-weight:normal;">487CE1020</div>
<div class="t" style="left:492.60px;top:156.37px;font-size:16.1px;color:#4a4a4a;font-weight:normal;">04/17/22</div>
<div class="t" style="left:636.00px;top:156.37px;font-size:16.1px;color:#4a4a4a;font-weight:normal;">04/23/22</div>
<div class="t" style="left:770.00px;top:157.22px;font-size:15.1px;color:#4a4a4a;font-weight:normal;">21</div>
<div class="t" style="left:873.20px;top:157.22px;font-size:15.1px;color:#4a4a4a;font-weight:normal;">$7,263.20</div>
<div class="t" style="left:983.20px;top:157.22px;font-size:15.1px;color:#4a4a4a;font-weight:normal;">$7,263.20</div>
<div class="t" style="left:1099.80px;top:157.22px;font-size:15.1px;color:#4a4a4a;font-weight:normal;">--</div>
<div class="t" style="left:1174.00px;top:157.22px;font-size:15.1px;color:#4a4a4a;font-weight:normal;">--</div>
<div class="t" style="left:1243.80px;top:157.22px;font-size:15.1px;color:#4a4a4a;font-weight:normal;">$7,263.20</div>
<div class="abs" style="left:38.39999999999998px;top:157.10000000000002px;width:17.4px;height:17px;border:1.3px solid #b9b9b9;border-radius:3px;background:#fff"></div>
<svg class="abs" style="left:1354.5px;top:164.79999999999995px;" width="12" height="4" viewBox="0 0 12 4"><circle cx="1.6" cy="2" r="1.3" fill="#444"/><circle cx="5.9" cy="2" r="1.3" fill="#444"/><circle cx="10.2" cy="2" r="1.3" fill="#444"/></svg>
<div class="abs" style="left:33px;top:190.0px;width:1373px;height:1.2px;background:#e6e6e6;"></div>
<div class="t" style="left:87.00px;top:204.97px;font-size:14.8px;color:#4a4a4a;font-weight:normal;">Magee, Lucy</div>
<div class="t" style="left:210.00px;top:204.97px;font-size:14.8px;color:#4a4a4a;font-weight:normal;">Texas Childrens...</div>
<div class="t" style="left:376.00px;top:204.76px;font-size:15.05px;color:#4a4a4a;font-weight:normal;">487CE1018</div>
<div class="t" style="left:492.60px;top:203.87px;font-size:16.1px;color:#4a4a4a;font-weight:normal;">04/10/22</div>
<div class="t" style="left:636.00px;top:203.87px;font-size:16.1px;color:#4a4a4a;font-weight:normal;">04/15/22</div>
<div class="t" style="left:770.00px;top:204.72px;font-size:15.1px;color:#4a4a4a;font-weight:normal;">21</div>
<div class="t" style="left:873.20px;top:204.72px;font-size:15.1px;color:#4a4a4a;font-weight:normal;">$4,980.48</div>
<div class="t" style="left:983.20px;top:204.72px;font-size:15.1px;color:#4a4a4a;font-weight:normal;">$4,980.48</div>
<div class="t" style="left:1099.80px;top:204.72px;font-size:15.1px;color:#4a4a4a;font-weight:normal;">--</div>
<div class="t" style="left:1174.00px;top:204.72px;font-size:15.1px;color:#4a4a4a;font-weight:normal;">--</div>
<div class="t" style="left:1243.80px;top:204.72px;font-size:15.1px;color:#4a4a4a;font-weight:normal;">$4,980.48</div>
<div class="abs" style="left:38.39999999999998px;top:204.60000000000002px;width:17.4px;height:17px;border:1.3px solid #b9b9b9;border-radius:3px;background:#fff"></div>
<svg class="abs" style="left:1354.5px;top:212.29999999999995px;" width="12" height="4" viewBox="0 0 12 4"><circle cx="1.6" cy="2" r="1.3" fill="#444"/><circle cx="5.9" cy="2" r="1.3" fill="#444"/><circle cx="10.2" cy="2" r="1.3" fill="#444"/></svg>
<div class="abs" style="left:33px;top:237.5px;width:1373px;height:1.2px;background:#e6e6e6;"></div>
<div class="t" style="left:87.00px;top:252.47px;font-size:14.8px;color:#4a4a4a;font-weight:normal;">Magee, Lucy</div>
<div class="t" style="left:210.00px;top:252.47px;font-size:14.8px;color:#4a4a4a;font-weight:normal;">Texas Childrens...</div>
<div class="t" style="left:376.00px;top:252.26px;font-size:15.05px;color:#4a4a4a;font-weight:normal;">487CE1014</div>
<div class="t" style="left:492.60px;top:251.37px;font-size:16.1px;color:#4a4a4a;font-weight:normal;">04/03/22</div>
<div class="t" style="left:636.00px;top:251.37px;font-size:16.1px;color:#4a4a4a;font-weight:normal;">04/09/22</div>
<div class="t" style="left:770.00px;top:252.22px;font-size:15.1px;color:#4a4a4a;font-weight:normal;">21</div>
<div class="t" style="left:873.20px;top:252.22px;font-size:15.1px;color:#4a4a4a;font-weight:normal;">$4,117.50</div>
<div class="t" style="left:983.20px;top:252.22px;font-size:15.1px;color:#4a4a4a;font-weight:normal;">$4,117.50</div>
<div class="t" style="left:1099.80px;top:252.22px;font-size:15.1px;color:#4a4a4a;font-weight:normal;">--</div>
<div class="t" style="left:1174.00px;top:252.22px;font-size:15.1px;color:#4a4a4a;font-weight:normal;">--</div>
<div class="t" style="left:1243.80px;top:252.22px;font-size:15.1px;color:#4a4a4a;font-weight:normal;">$4,117.50</div>
<div class="abs" style="left:38.39999999999998px;top:252.10000000000002px;width:17.4px;height:17px;border:1.3px solid #b9b9b9;border-radius:3px;background:#fff"></div>
<svg class="abs" style="left:1354.5px;top:259.79999999999995px;" width="12" height="4" viewBox="0 0 12 4"><circle cx="1.6" cy="2" r="1.3" fill="#444"/><circle cx="5.9" cy="2" r="1.3" fill="#444"/><circle cx="10.2" cy="2" r="1.3" fill="#444"/></svg>
<div class="abs" style="left:33px;top:285.0px;width:1373px;height:1.2px;background:#e6e6e6;"></div>
</div>
<div class="abs" style="left:452px;top:940px;width:1373px;height:1.3px;background:#e0e0e0;z-index:2"></div>
<div class="t" style="left:1292.20px;top:955.70px;font-size:15.0px;color:#4a4a4a;font-weight:normal;z-index:2;">$93,153.52</div>
<div class="t" style="left:1402.20px;top:955.70px;font-size:15.0px;color:#4a4a4a;font-weight:normal;z-index:2;">$93,153.52</div>
<div class="t" style="left:1518.80px;top:955.70px;font-size:15.0px;color:#4a4a4a;font-weight:normal;z-index:2;">$0.00</div>
<div class="t" style="left:1593.00px;top:955.70px;font-size:15.0px;color:#4a4a4a;font-weight:normal;z-index:2;">$0.00</div>
<div class="t" style="left:1662.80px;top:955.70px;font-size:15.0px;color:#4a4a4a;font-weight:normal;z-index:2;">$93,153.52</div>
</body></html>
